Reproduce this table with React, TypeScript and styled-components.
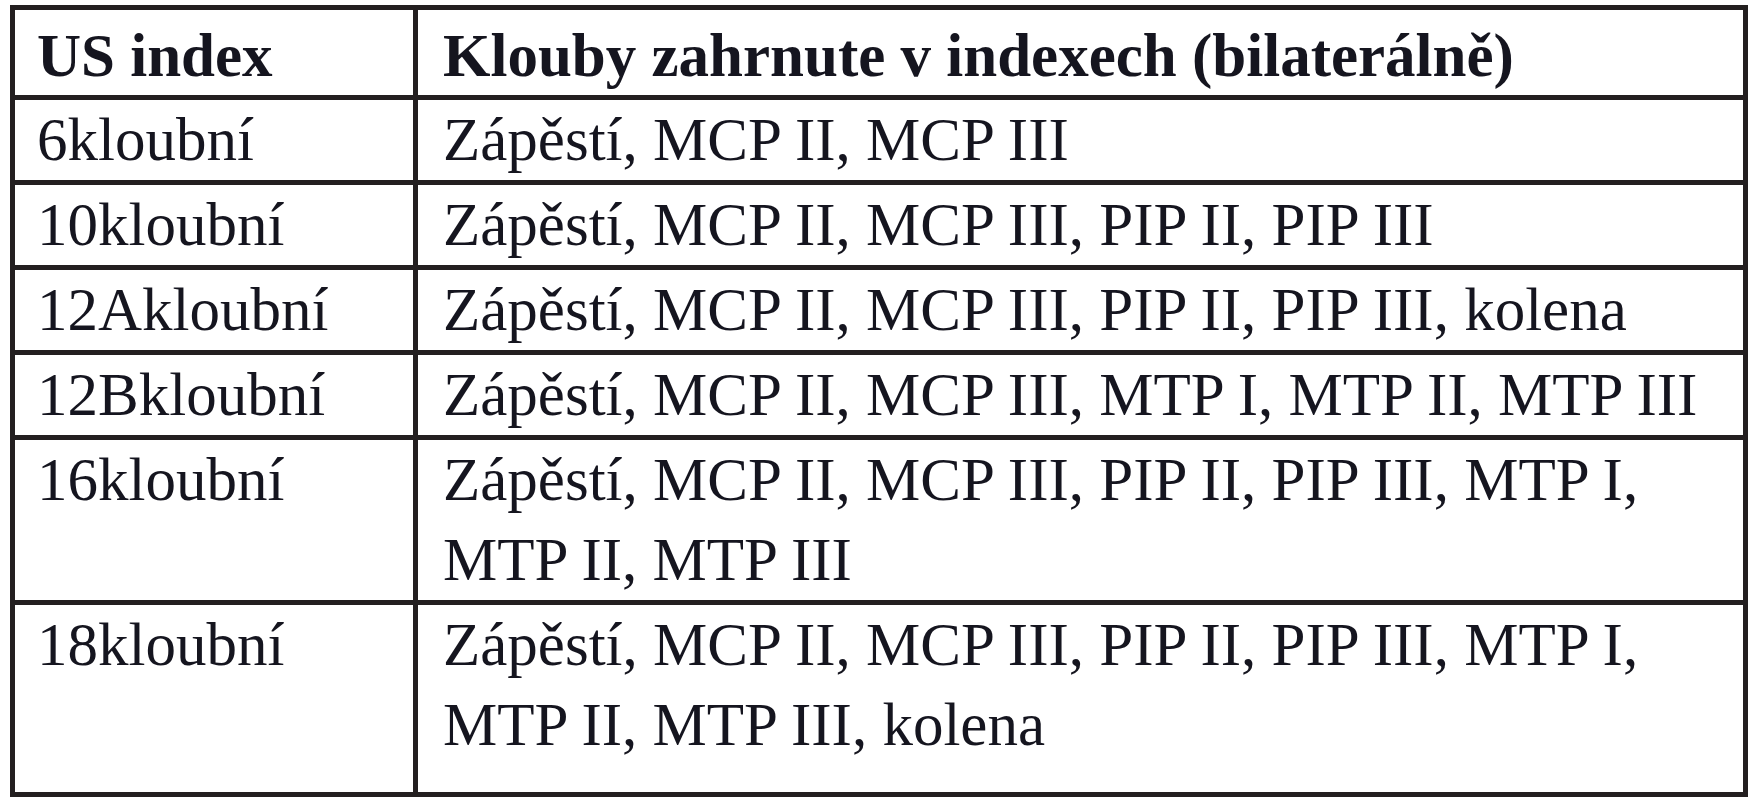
import React from "react";
import styled, { createGlobalStyle } from "styled-components";

const Global = createGlobalStyle`
  html, body {
    margin: 0;
    padding: 0;
    background: #ffffff;
  }
`;

const Page = styled.div`
  padding: 5px 0 0 10px;
`;

const Grid = styled.div`
  display: grid;
  grid-template-columns: 398px 1fr;
  gap: 5px;
  padding: 5px;
  width: 1738px;
  box-sizing: border-box;
  background: #231f20;
`;

const Cell = styled.div<{ $head?: boolean; $second?: boolean; $last?: boolean }>`
  background: #ffffff;
  color: #15151f;
  font-family: "Liberation Serif", "Times New Roman", serif;
  font-size: 61px;
  font-weight: ${(p) => (p.$head ? 700 : 400)};
  line-height: ${(p) => (p.$head ? "78px" : "80px")};
  padding: ${(p) => (p.$head ? "7px" : "0")} ${(p) => (p.$second ? "25px" : "22px")}
    ${(p) => (p.$last ? "27px" : "0")};
  white-space: nowrap;
  overflow: hidden;
`;

const Line = styled.span`
  display: block;
`;

type Row = { index: string; lines: string[] };

const rows: Row[] = [
  { index: "6kloubní", lines: ["Zápěstí, MCP II, MCP III"] },
  { index: "10kloubní", lines: ["Zápěstí, MCP II, MCP III, PIP II, PIP III"] },
  { index: "12Akloubní", lines: ["Zápěstí, MCP II, MCP III, PIP II, PIP III, kolena"] },
  { index: "12Bkloubní", lines: ["Zápěstí, MCP II, MCP III, MTP I, MTP II, MTP III"] },
  {
    index: "16kloubní",
    lines: ["Zápěstí, MCP II, MCP III, PIP II, PIP III, MTP I,", "MTP II, MTP III"],
  },
  {
    index: "18kloubní",
    lines: ["Zápěstí, MCP II, MCP III, PIP II, PIP III, MTP I,", "MTP II, MTP III, kolena"],
  },
];

export default function App() {
  return (
    <>
      <Global />
      <Page>
        <Grid>
          <Cell $head>
            <Line>US index</Line>
          </Cell>
          <Cell $head $second>
            <Line>Klouby zahrnute v indexech (bilaterálně)</Line>
          </Cell>
          {rows.map((r, i) => {
            const last = i === rows.length - 1;
            return (
              <React.Fragment key={r.index}>
                <Cell $last={last}>
                  <Line>{r.index}</Line>
                </Cell>
                <Cell $second $last={last}>
                  {r.lines.map((l) => (
                    <Line key={l}>{l}</Line>
                  ))}
                </Cell>
              </React.Fragment>
            );
          })}
        </Grid>
      </Page>
    </>
  );
}
